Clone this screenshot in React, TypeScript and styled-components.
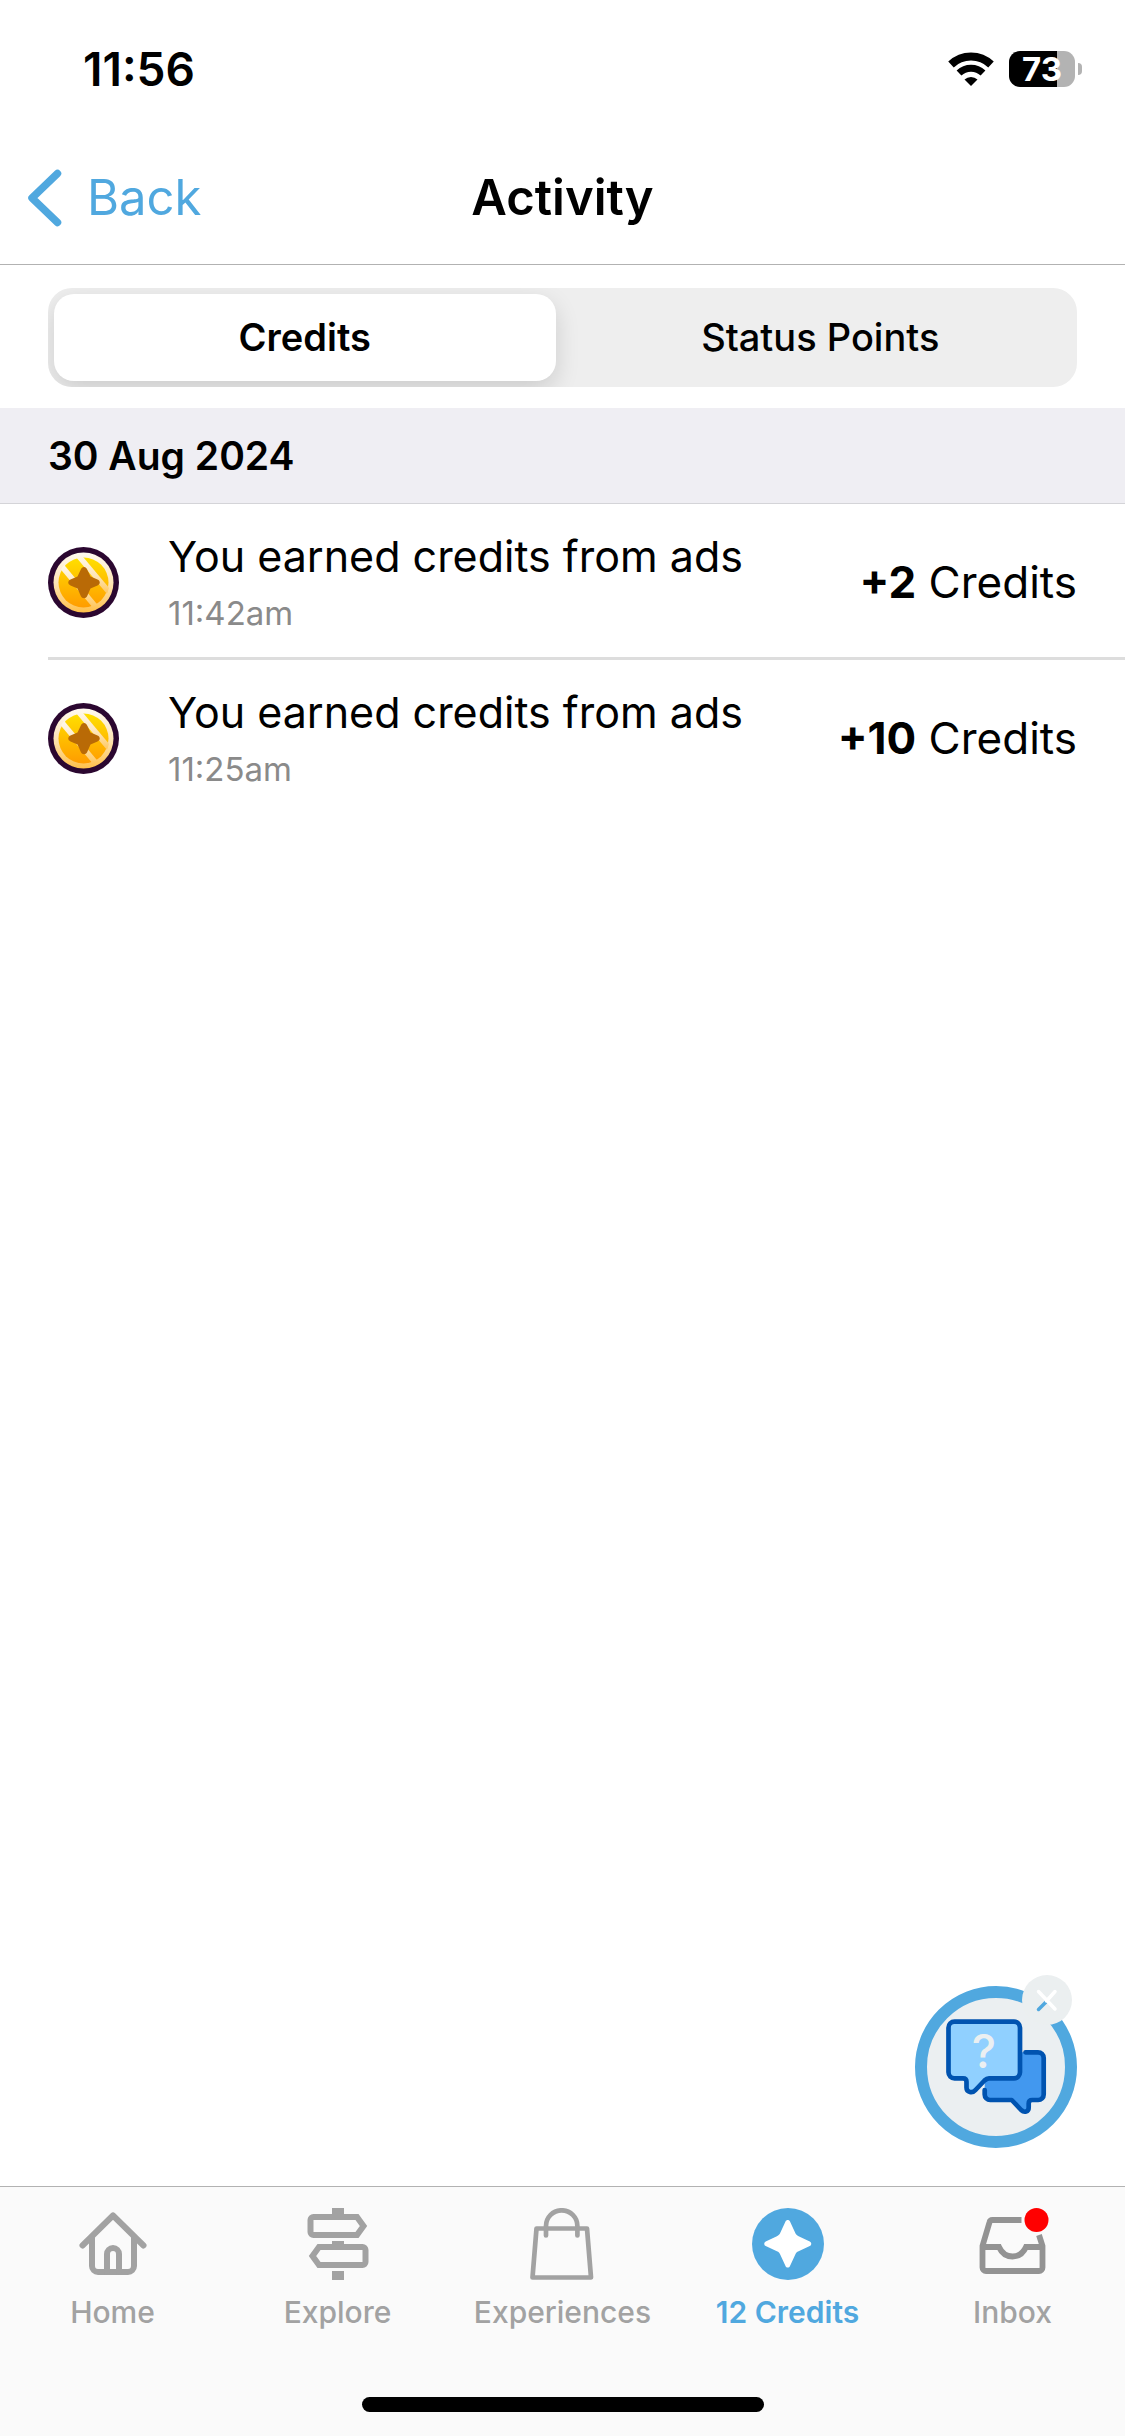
import React, { useState } from "react";
import styled, { createGlobalStyle } from "styled-components";

const blue = "#50a8df";
const grey = "#a2a2a2";
const hairline = "#b2b2b2";

const GlobalStyle = createGlobalStyle`
  *, *::before, *::after { box-sizing: border-box; }
  body {
    margin: 0;
    background: #fff;
    color: #000;
    font-family: Inter, "Liberation Sans", sans-serif;
  }
  button { font: inherit; color: inherit; border: 0; padding: 0; background: none; cursor: pointer; }
  svg { display: block; }
`;

const Screen = styled.div`
  display: flex;
  flex-direction: column;
  min-height: 100vh;
`;

const StatusBar = styled.div`
  display: flex;
  align-items: center;
  justify-content: space-between;
  height: 138px;
  padding: 0 43px 0 83px;
`;

const Clock = styled.time`
  font-size: 46px;
  line-height: 56px;
  font-weight: 600;
`;

const StatusIcons = styled.div`
  display: flex;
  align-items: center;
  gap: 15px;
`;

const Battery = styled.div`
  display: flex;
  align-items: center;
  gap: 3px;
`;

const BatteryBody = styled.div`
  display: grid;
  place-items: center;
  width: 66px;
  height: 36px;
  border-radius: 11px;
  background: linear-gradient(90deg, #000 73%, #b3b3b3 73%);
  color: #fff;
  font-size: 33px;
  line-height: 36px;
  font-weight: 700;
`;

const BatteryTip = styled.div`
  width: 4px;
  height: 12px;
  border-radius: 0 4px 4px 0;
  background: #b3b3b3;
`;

const NavBar = styled.header`
  display: grid;
  grid-template-columns: 1fr auto 1fr;
  align-items: center;
  height: 127px;
  padding: 0 28px 7px;
  border-bottom: 1px solid ${hairline};
`;

const BackLink = styled.a`
  display: flex;
  align-items: center;
  gap: 25px;
  color: ${blue};
  font-size: 49px;
  line-height: 60px;
  text-decoration: none;
`;

const Title = styled.h1`
  margin: 0;
  font-size: 49px;
  line-height: 60px;
  font-weight: 600;
`;

const Main = styled.main`
  position: relative;
  flex: 1;
`;

const Segments = styled.div`
  display: grid;
  grid-template-columns: 1fr 1fr;
  gap: 14px;
  margin: 23px 48px 21px;
  padding: 6px;
  border-radius: 24px;
  background: #eee;
  overflow: hidden;
`;

const Segment = styled.button<{ $active: boolean }>`
  height: 87px;
  padding-bottom: 2px;
  border-radius: 20px;
  font-size: 38px;
  line-height: 48px;
  font-weight: ${(p) => (p.$active ? 600 : 500)};
  background: ${(p) => (p.$active ? "#fff" : "transparent")};
  box-shadow: ${(p) => (p.$active ? "0 9px 24px rgba(0, 0, 0, 0.14)" : "none")};
`;

const DateHeading = styled.h2`
  margin: 0;
  padding: 24px 48px 23px;
  border-bottom: 1px solid #d4d4d8;
  background: #efeef3;
  font-size: 39px;
  line-height: 48px;
  font-weight: 600;
`;

const List = styled.ul`
  margin: 0;
  padding: 0 0 0 48px;
  list-style: none;
`;

const Row = styled.li`
  box-sizing: content-box;
  display: flex;
  align-items: center;
  height: 150px;
  padding: 3px 48px 0 0;
  & + & {
    border-top: 3px solid #ddd;
  }
`;

const Details = styled.div`
  flex: 1;
  padding: 4px 0 0 49px;
`;

const Description = styled.p`
  margin: 0;
  font-size: 43px;
  line-height: 58px;
`;

const Time = styled.p`
  margin: 0;
  color: #8a8a8a;
  font-size: 33px;
  line-height: 56px;
`;

const Amount = styled.p`
  margin: 0;
  font-size: 44px;
  line-height: 60px;
  b { font-weight: 700; }
`;

const Chat = styled.div`
  position: absolute;
  right: 48px;
  bottom: 38px;
`;

const ChatButton = styled.button`
  display: block;
  width: 162px;
  height: 162px;
  border: 12px solid ${blue};
  border-radius: 50%;
  background: #ebeff1;
`;

const CloseButton = styled.button`
  position: absolute;
  top: -11px;
  right: 5px;
  width: 50px;
  height: 50px;
  border-radius: 50%;
  background: #ebeff0;
`;

const TabBar = styled.nav`
  border-top: 1px solid ${hairline};
  background: #fafafa;
`;

const Tabs = styled.div`
  display: grid;
  grid-template-columns: repeat(5, 1fr);
  padding-top: 21px;
`;

const Tab = styled.a<{ $active?: boolean }>`
  display: flex;
  flex-direction: column;
  align-items: center;
  gap: 14px;
  color: ${(p) => (p.$active ? blue : grey)};
  font-size: 30px;
  line-height: 36px;
  font-weight: ${(p) => (p.$active ? 600 : 500)};
  text-decoration: none;
`;

const HomeIndicator = styled.div`
  width: 402px;
  height: 15px;
  margin: 67px auto 24px;
  border-radius: 8px;
  background: #000;
`;

const WifiIcon = () => (
  <svg width="46" height="34" viewBox="0 0 46 34" fill="none" stroke="#000" aria-label="Wi-Fi">
    <path d="M3 12.5A29 29 0 0 1 43 12.5" strokeWidth="8" />
    <path d="M11 21A17.500 17.500 0 0 1 35 21" strokeWidth="7" />
    <path d="M23 34l-6.500-6.500a9.500 9.500 0 0 1 13 0z" fill="#000" stroke="none" />
  </svg>
);

const ChevronIcon = () => (
  <svg width="34" height="58" viewBox="0 0 34 58" fill="none" stroke="currentColor" strokeWidth="7.500" strokeLinecap="round" strokeLinejoin="round" aria-hidden="true">
    <path d="M29.500 4.500L4 29l25.500 24.500" />
  </svg>
);

const CoinIcon = () => (
  <svg width="71" height="71" viewBox="0 0 71 71" aria-hidden="true">
    <defs>
      <linearGradient id="coin-rim" x1="0" y1="0" x2="0" y2="1">
        <stop offset="0" stopColor="#fffaf0" />
        <stop offset="0.5" stopColor="#fde5b8" />
        <stop offset="1" stopColor="#ffc04a" />
      </linearGradient>
      <linearGradient id="coin-face" x1="0" y1="0" x2="0" y2="1">
        <stop offset="0" stopColor="#ffe000" />
        <stop offset="1" stopColor="#ff9c00" />
      </linearGradient>
      <clipPath id="coin-clip"><circle cx="35.500" cy="35.500" r="26" /></clipPath>
    </defs>
    <circle cx="35.500" cy="35.500" r="35.500" fill="#2b0730" />
    <circle cx="35.500" cy="35.500" r="30" fill="url(#coin-rim)" />
    <circle cx="35.500" cy="35.500" r="25" fill="url(#coin-face)" />
    <g clipPath="url(#coin-clip)" stroke="url(#coin-rim)" strokeWidth="5.500">
      <path d="M29 7L66 51" />
      <path d="M11 16L52 65" />
    </g>
    <path d="M36 20c1.600 0 2.500 1 3.200 2.600l3.300 7 7 3c3 1.400 3 4.600 0 5.900l-7 3-3.300 7.500c-1.400 3-5 3-6.400 0l-3.300-7.500-7-3c-3-1.300-3-4.500 0-5.900l7-3 3.300-7C33.500 21 34.400 20 36 20z" fill="#b96a06" />
  </svg>
);

const ChatIcon = () => (
  <svg width="138" height="138" viewBox="12 12 138 138" fill="none" stroke="#0053b0" strokeWidth="4.700" strokeLinecap="round" strokeLinejoin="round" aria-hidden="true">
    <path d="M99 66.300h24a5.700 5.700 0 0 1 5.700 5.700v36.500a5.500 5.500 0 0 1-5.500 5.500h-6c-2.500 0-3.500 1-3.500 3.500v4c0 4.500-4.500 5.500-7.500 2.500L96.700 114H75.200a5.500 5.500 0 0 1-5.500-5.500V92.300z" fill="#4298ef" stroke="none" />
    <path d="M110.500 66.300H123a5.700 5.700 0 0 1 5.700 5.700v36.500a5.500 5.500 0 0 1-5.500 5.500h-6c-2.500 0-3.500 1-3.500 3.500v4c0 4.500-4.500 5.500-7.500 2.500L96.700 114H75.200a5.500 5.500 0 0 1-5.500-5.500v-4.500" />
    <path d="M39.500 35.700H99a6 6 0 0 1 6 6v44.600a6 6 0 0 1-6 6H74c-2 0-3 .7-4.500 2.200L60.500 104c-3 3.500-9 2.500-9-2.500v-5.700c0-2.300-1.200-3.500-3.500-3.500h-8.500a6 6 0 0 1-6-6V41.700a6 6 0 0 1 6-6z" fill="#90d0ff" />
    <text x="69" y="82" textAnchor="middle" fill="#ebeff1" stroke="none" fontFamily="Inter, sans-serif" fontSize="46" fontWeight="500">?</text>
  </svg>
);

const CloseIcon = () => (
  <svg width="50" height="50" viewBox="0 0 50 50" fill="none" strokeWidth="3.500" strokeLinecap="round" aria-hidden="true">
    <path d="M25 26l-8.500 8.500" stroke={blue} />
    <path d="M16.500 16.500l16.500 17.500M33 16.500l-8.500 9.500" stroke="#fff" />
  </svg>
);

const HomeIcon = () => (
  <svg width="72" height="72" viewBox="0 0 72 72" fill="none" stroke="currentColor" strokeWidth="6" strokeLinecap="round" strokeLinejoin="round" aria-hidden="true">
    <path d="M5.500 37.500L36 7.500l30.500 30M15 30v28a6 6 0 0 0 6 6h30a6 6 0 0 0 6-6V30" />
    <path d="M30 64V46a6 6 0 0 1 12 0v18" />
  </svg>
);

const ExploreIcon = () => (
  <svg width="72" height="72" viewBox="0 0 72 72" fill="none" stroke="currentColor" strokeWidth="6" aria-hidden="true">
    <path d="M11.500 9H55l6.500 9-6.500 9H11.500A3 3 0 0 1 8.500 24V12a3 3 0 0 1 3-3z" />
    <path d="M60.500 39H17l-6.500 9 6.500 9h43.500a3 3 0 0 0 3-3V42a3 3 0 0 0-3-3z" />
    <path d="M30 0h12v6H30zM30 33h12v4H30zM30 63h12v9H30z" fill="currentColor" stroke="none" />
  </svg>
);

const BagIcon = () => (
  <svg width="72" height="72" viewBox="0 0 72 72" fill="none" stroke="currentColor" strokeWidth="4.700" strokeLinecap="round" strokeLinejoin="round" aria-hidden="true">
    <path d="M9.500 20.500h50.500l4 49H5.500z" />
    <path d="M19 27.500V18a15.700 15.700 0 0 1 31.400 0v9.500" />
  </svg>
);

const CreditsIcon = () => (
  <svg width="72" height="72" viewBox="0 0 72 72" aria-hidden="true">
    <circle cx="36" cy="36" r="36" fill="currentColor" />
    <path d="M33.500 13.500c.8-2 3.700-2 4.500 0l5.200 11.300c.8 1.800 1.600 2.600 3.400 3.400l11.200 5.300c2 1 2 3.700 0 4.600l-11.200 5.200c-1.800.8-2.600 1.600-3.400 3.400L38 58c-.8 2-3.700 2-4.500 0l-5.200-11.300c-.8-1.800-1.600-2.600-3.400-3.400L13.700 38.100c-2-.9-2-3.600 0-4.600l11.200-5.300c1.800-.8 2.600-1.600 3.400-3.400z" fill="#fff" />
  </svg>
);

const InboxIcon = () => (
  <svg width="72" height="72" viewBox="0 0 72 72" fill="none" stroke="#939393" strokeWidth="5.800" aria-hidden="true">
    <path d="M44.500 12H15.500a3 3 0 0 0-3 2.300L5.500 38v21.500a3.500 3.500 0 0 0 3.500 3.500h53a3.500 3.500 0 0 0 3.500-3.500V38L62 27" />
    <path d="M5.500 39H22c2.500 5.500 7 9.500 13.500 9.500S46.500 44.500 49 39h16.500" />
    <circle cx="59.500" cy="12" r="12" fill="#f00" stroke="none" />
  </svg>
);

const entries = [
  { text: "You earned credits from ads", time: "11:42am", amount: "+2" },
  { text: "You earned credits from ads", time: "11:25am", amount: "+10" },
];

const tabs = [
  { label: "Home", Icon: HomeIcon },
  { label: "Explore", Icon: ExploreIcon },
  { label: "Experiences", Icon: BagIcon },
  { label: "12 Credits", Icon: CreditsIcon, active: true },
  { label: "Inbox", Icon: InboxIcon },
];

export default function App() {
  const [segment, setSegment] = useState("Credits");
  return (
    <Screen>
      <GlobalStyle />
      <StatusBar>
        <Clock>11:56</Clock>
        <StatusIcons>
          <WifiIcon />
          <Battery>
            <BatteryBody>73</BatteryBody>
            <BatteryTip />
          </Battery>
        </StatusIcons>
      </StatusBar>
      <NavBar>
        <BackLink href="#back">
          <ChevronIcon />
          Back
        </BackLink>
        <Title>Activity</Title>
      </NavBar>
      <Main>
        <Segments role="tablist">
          {["Credits", "Status Points"].map((name) => (
            <Segment
              key={name}
              type="button"
              role="tab"
              aria-selected={segment === name}
              $active={segment === name}
              onClick={() => setSegment(name)}
            >
              {name}
            </Segment>
          ))}
        </Segments>
        <DateHeading>30 Aug 2024</DateHeading>
        <List>
          {entries.map((entry) => (
            <Row key={entry.time}>
              <CoinIcon />
              <Details>
                <Description>{entry.text}</Description>
                <Time>{entry.time}</Time>
              </Details>
              <Amount>
                <b>{entry.amount}</b> Credits
              </Amount>
            </Row>
          ))}
        </List>
        <Chat>
          <ChatButton type="button" aria-label="Open help chat">
            <ChatIcon />
          </ChatButton>
          <CloseButton type="button" aria-label="Dismiss help chat">
            <CloseIcon />
          </CloseButton>
        </Chat>
      </Main>
      <TabBar>
        <Tabs>
          {tabs.map(({ label, Icon, active }) => (
            <Tab key={label} href={`#${label}`} $active={active}>
              <Icon />
              {label}
            </Tab>
          ))}
        </Tabs>
        <HomeIndicator />
      </TabBar>
    </Screen>
  );
}
